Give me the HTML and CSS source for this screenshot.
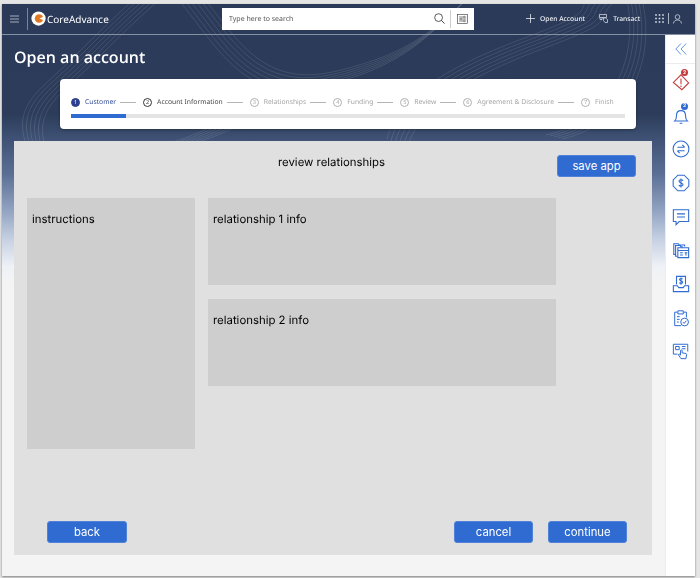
FILE: index.html
```html
<!DOCTYPE html>
<html lang="en">

<head>
  <meta charset="UTF-8">
  <meta name="viewport" content="width=device-width, initial-scale=1.0">
  <title>Open an account</title>
  <link rel="stylesheet" href="styles.css">
</head>

<body>
  <div class="app">
    <svg class="swirl" width="693" height="300" viewBox="0 0 693 300" fill="none">
      <defs>
        <g id="strand-a"><path d="M24 140C10 100 40 85 70 55S120 5 150-20"/></g>
        <g id="strand-b"><path d="M180 0C220 50 245 100 320 82S420 40 470-10"/></g>
        <g id="strand-c"><path d="M385 135C395 95 440 65 520 35S570 10 590-10"/></g>
        <g id="strand-d"><path d="M560 135C625 120 655 60 640-5"/></g>
        <g id="strand-e"><path d="M165 140C190 132 210 125 235 105"/></g>
      </defs>
      <g class="swirl-lines">
        <use href="#strand-a"/><use href="#strand-a" x="4" y="1"/><use href="#strand-a" x="8" y="2"/><use href="#strand-a" x="12" y="3"/><use href="#strand-a" x="16" y="4"/><use href="#strand-a" x="20" y="5"/>
        <use href="#strand-b"/><use href="#strand-b" x="3" y="-3"/><use href="#strand-b" x="6" y="-6"/><use href="#strand-b" x="9" y="-9"/><use href="#strand-b" x="12" y="-12"/><use href="#strand-b" x="15" y="-15"/>
        <use href="#strand-c"/><use href="#strand-c" x="4" y="2"/><use href="#strand-c" x="8" y="4"/><use href="#strand-c" x="12" y="6"/><use href="#strand-c" x="16" y="8"/><use href="#strand-c" x="20" y="10"/>
        <use href="#strand-d"/><use href="#strand-d" x="-4" y="-1"/><use href="#strand-d" x="-8" y="-2"/><use href="#strand-d" x="-12" y="-3"/><use href="#strand-d" x="-16" y="-4"/>
        <use href="#strand-e"/><use href="#strand-e" x="5"/><use href="#strand-e" x="10"/><use href="#strand-e" x="15"/><use href="#strand-e" x="20"/><use href="#strand-e" x="25"/>
      </g>
    </svg>

    <header class="topbar">
      <div class="brand">
        <svg class="burger" width="9" height="8" viewBox="0 0 9 8"><path d="M0 1h9M0 4h9M0 7h9" stroke="#c3cad6" stroke-width=".8"/></svg>
        <span class="brand-sep"></span>
        <svg class="logo" width="15" height="15" viewBox="0 0 16 16">
          <circle cx="8" cy="8" r="7.6" fill="#fff"/>
          <circle cx="8.6" cy="8" r="4.6" fill="#e07a22"/>
          <path d="M9 8L15 5.4V10.6Z" fill="#fff"/>
        </svg>
        <span class="brand-name">CoreAdvance</span>
      </div>

      <div class="search">
        <span class="search-text">Type here to search</span>
        <svg width="11" height="11" viewBox="0 0 11 11" fill="none" stroke="#333"><circle cx="4.6" cy="4.6" r="3.9" stroke-width=".8"/><path d="M7.5 7.5L10.6 10.6" stroke-width=".9"/></svg>
        <span class="search-sep"></span>
        <svg width="11" height="10" viewBox="0 0 11 10" fill="none" stroke="#333" stroke-width=".6"><rect x=".5" y=".5" width="10" height="9"/><path d="M2 3h4M8.200 3h1M2 5h1.200M5.200 5h4M2 7h4M8.200 7h1"/><circle cx="7.200" cy="3" r=".8"/><circle cx="4.200" cy="5" r=".8"/><circle cx="7.200" cy="7" r=".8"/></svg>
      </div>

      <nav class="actions">
        <a class="action" href="#">
          <svg width="9" height="9" viewBox="0 0 9 9"><path d="M4.5 0v9M0 4.500h9" stroke="#e4e8ee" stroke-width=".8"/></svg>
          Open Account
        </a>
        <a class="action" href="#">
          <svg width="9" height="9" viewBox="0 0 9 9" fill="none" stroke="#e4e8ee" stroke-width=".7"><path d="M.5.500h7v3h-7zM3 3.500v2H1v-2M5 4h1.500l2 1.500v3H6L4.500 6.500V4z"/></svg>
          Transact
        </a>
        <span class="account">
          <svg width="9" height="9" viewBox="0 0 9 9" fill="#e4e8ee"><path d="M.2.200h1.600v1.600H.2zM3.700.200h1.600v1.600H3.700zM7.200.200h1.600v1.600H7.200zM.2 3.700h1.600v1.600H.2zM3.700 3.700h1.600v1.600H3.700zM7.200 3.700h1.600v1.600H7.200zM.2 7.200h1.600v1.600H.2zM3.700 7.200h1.600v1.600H3.700zM7.200 7.200h1.600v1.600H7.200z"/></svg>
          <span class="account-sep"></span>
          <svg width="9" height="10" viewBox="0 0 9 10" fill="none" stroke="#e4e8ee" stroke-width=".7"><circle cx="4.500" cy="3" r="2.300"/><path d="M.5 9.500C.8 6.800 2.500 6 4.500 6s3.700.8 4 3.500"/></svg>
        </span>
      </nav>
    </header>

    <div class="content">
      <main class="page">
        <h1 class="page-title">Open an account</h1>

        <section class="stepper">
          <ol class="steps">
            <li class="step step-current"><span class="step-num">1</span>Customer</li>
            <li class="step step-next"><span class="step-num">2</span>Account Information</li>
            <li class="step"><span class="step-num">3</span>Relationships</li>
            <li class="step"><span class="step-num">4</span>Funding</li>
            <li class="step"><span class="step-num">5</span>Review</li>
            <li class="step"><span class="step-num">6</span>Agreement &amp; Disclosure</li>
            <li class="step step-last"><span class="step-num">7</span>Finish</li>
          </ol>
          <div class="progress"><div class="progress-fill"></div></div>
        </section>

        <section class="panel">
          <div class="panel-head">
            <h2 class="panel-title">review relationships</h2>
            <button class="btn btn-save">save app</button>
          </div>

          <div class="panel-body">
            <div class="box box-side">instructions</div>
            <div class="rel-list">
              <div class="box box-rel">relationship 1 info</div>
              <div class="box box-rel">relationship 2 info</div>
            </div>
          </div>

          <div class="panel-foot">
            <button class="btn btn-back">back</button>
            <div class="foot-right">
              <button class="btn">cancel</button>
              <button class="btn">continue</button>
            </div>
          </div>
        </section>
      </main>

      <aside class="side">
        <div class="side-top">
          <svg width="12" height="12" viewBox="0 0 12 12" fill="none" stroke="#3f78d6" stroke-width=".8"><path d="M6 .5L.8 6L6 11.500M11.200.5L6 6l5.200 5.500"/></svg>
        </div>
        <ul class="side-icons">
          <li class="side-item">
            <svg viewBox="0 0 20 20" fill="none" stroke="#c23b3b" stroke-width="1.200"><path d="M10 2L18.500 11 11 18.500 1.500 10.500z"/><path d="M10 6v6.500M10 14v1.500"/></svg>
            <span class="badge badge-red">2</span>
          </li>
          <li class="side-item">
            <svg viewBox="0 0 20 20" fill="none" stroke="#2f6bd1" stroke-width="1.200"><path d="M3 15.500c1.800-1.500 2-3 2-6 0-3.300 2-5.500 5-5.500s5 2.200 5 5.500c0 3 .2 4.500 2 6zM8.500 18h3"/></svg>
            <span class="badge badge-blue">2</span>
          </li>
          <li class="side-item">
            <svg viewBox="0 0 20 20" fill="none" stroke="#2f6bd1" stroke-width="1.200"><circle cx="10" cy="10" r="8.800"/><path d="M6 8h8M11.500 5.500L14 8M14 12H6M8.500 14.500L6 12"/></svg>
          </li>
          <li class="side-item">
            <svg viewBox="0 0 20 20" fill="none" stroke="#2f6bd1" stroke-width="1.200"><path d="M6.500 1.300h7l5.200 5.200v7l-5.200 5.200h-7l-5.200-5.200v-7z"/><path d="M12.300 7.500C11.800 6.700 11 6.400 10 6.400c-1.300 0-2.200.6-2.200 1.700 0 2.300 4.500 1.300 4.500 3.700 0 1.100-1 1.800-2.300 1.800-1 0-1.900-.4-2.400-1.200M10 5v10"/></svg>
          </li>
          <li class="side-item">
            <svg viewBox="0 0 20 20" fill="none" stroke="#2f6bd1" stroke-width="1.200"><path d="M1.500 2h17v13H8l-3.500 3.500V15h-3z"/><path d="M5.500 6.500h9M5.500 10h9"/></svg>
          </li>
          <li class="side-item">
            <svg viewBox="0 0 20 20" fill="none" stroke="#2f6bd1" stroke-width="1.200"><path d="M4 15H2V3h5l1 1.500h6V6M6 17H4V5h5l1 1.500h2"/><path d="M6.500 7.500h12v11h-12zM6.500 10.500h12M9 13h3M9 15.500h3M14 13h3M15.500 13v3"/></svg>
          </li>
          <li class="side-item">
            <svg viewBox="0 0 20 20" fill="none" stroke="#2f6bd1" stroke-width="1.200"><path d="M5 10.500V1.500h10v9M1.500 12v6.500h17V12H14l-1.500 2h-5L6 12z"/><path d="M11.800 4.500C11.400 4 10.800 3.800 10 3.800c-1 0-1.700.5-1.700 1.300 0 1.800 3.500 1 3.500 2.900 0 .8-.8 1.400-1.800 1.400-.8 0-1.400-.3-1.800-.9M10 2.800v8"/></svg>
          </li>
          <li class="side-item">
            <svg viewBox="0 0 20 20" fill="none" stroke="#2f6bd1" stroke-width="1.100"><path d="M10 18.500H3V3.500h3M13 3.500h3v6"/><path d="M6.500 2h6v3.500h-6zM5.500 8.500h3M5.500 11.500h3M5.500 14.500h2"/><circle cx="14" cy="14.500" r="4.300"/><path d="M12 14.500l1.500 1.500 2.500-3"/></svg>
          </li>
          <li class="side-item">
            <svg viewBox="0 0 20 20" fill="none" stroke="#2f6bd1" stroke-width="1.100"><path d="M6 13.500H1.500v-11h16v8"/><path d="M4 5h4v3.500H4zM11 5h4M11 7.500h4"/><path d="M9 17l-2-3 1-.7 1.500 1.200V9.500c0-1 1.800-1 1.800 0V12l4.200.8c.5.100.7.500.7 1l-.7 4.700H10z"/></svg>
          </li>
        </ul>
      </aside>
    </div>
  </div>
</body>

</html>
```

FILE: styles.css
```css
html {
  box-sizing: border-box;
  font-family: "Inter", sans-serif;
  font-size: 16px;
  text-rendering: geometricPrecision;
}

*,
*::before,
*::after {
  box-sizing: inherit;
}

body {
  margin: 0;
  height: 578px;
  padding: 4px 5px 2px 2px;
  background-color: #e5e5e5;
  overflow: hidden;
}

.app {
  position: relative;
  height: 572px;
  display: flex;
  flex-direction: column;
  background: linear-gradient(#2a3a58 0, #2c3c5a 110px, #3f5275 135px, #5b6f95 170px, #8fa1c0 205px, #c5d0e2 235px, #eef1f6 262px, #f4f4f4 280px);
  box-shadow: 0 1px 2px rgba(0, 0, 0, .45);
  overflow: hidden;
}

.swirl {
  position: absolute;
  left: 0;
  top: 0;
}

.swirl-lines {
  stroke: #fff;
  stroke-width: .5;
  opacity: .22;
}

/* top bar */
.topbar {
  position: relative;
  flex: none;
  height: 31px;
  padding: 4px 0 5px;
  display: flex;
  align-items: center;
  border-bottom: 1px solid #8592a6;
  color: #fff;
}

.brand {
  width: 220px;
  display: flex;
  align-items: center;
  padding-left: 8px;
}

.burger {
  flex: none;
}

.brand-sep {
  width: 1px;
  height: 22px;
  margin: 0 3px 0 8px;
  background-color: #77849a;
}

.logo {
  flex: none;
}

.brand-name {
  margin-left: 1px;
  font-family: "Noto Sans", sans-serif;
  font-size: 10px;
}

.search {
  width: 252px;
  height: 22px;
  display: flex;
  align-items: center;
  padding: 0 6px 0 7px;
  background-color: #fff;
}

.search-text {
  flex: 1;
  padding-top: 2px;
  font-family: "Noto Sans", sans-serif;
  font-size: 7px;
  color: #555;
}

.search-sep {
  width: 1px;
  height: 18px;
  margin: 0 6px 0 5px;
  background-color: #ccc;
}

.actions {
  flex: 1;
  display: flex;
  align-items: center;
  padding-left: 52px;
  font-family: "Noto Sans", sans-serif;
  font-size: 6.7px;
  font-weight: 500;
}

.action {
  display: flex;
  align-items: center;
  gap: 5px;
  margin-right: 14px;
  color: #eef1f5;
  text-decoration: none;
}

.account {
  display: flex;
  align-items: center;
  margin-left: 1px;
}

.account-sep {
  width: 1px;
  height: 11px;
  margin: 0 4px;
  background-color: #aab4c4;
}

/* page */
.content {
  position: relative;
  flex: 1;
  min-height: 0;
  display: flex;
}

.page {
  flex: 1;
  min-width: 0;
  padding: 0 13px 21px 12px;
  display: flex;
  flex-direction: column;
}

.page-title {
  margin: 12px 0 11px;
  font-family: "Open Sans", sans-serif;
  font-size: 16px;
  line-height: 21px;
  font-weight: 600;
  color: #fff;
}

.stepper {
  flex: none;
  height: 50px;
  margin: 0 16px 12px 46px;
  padding: 18px 11px 0;
  background-color: #fff;
  border-radius: 4px;
  box-shadow: 0 1px 3px rgba(0, 0, 0, .35);
}

.steps {
  display: flex;
  margin: 0;
  padding: 0;
  list-style: none;
  font-family: "Noto Sans", sans-serif;
  font-size: 6.75px;
  line-height: 10px;
  color: #a5a5a5;
}

.step {
  display: flex;
  align-items: center;
}

.step::after {
  content: "";
  width: 16px;
  height: 1px;
  margin: 0 7px 0 4px;
  background-color: #b5b5b5;
}

.step-last::after {
  display: none;
}

.step-num {
  width: 9px;
  height: 9px;
  margin-right: 5px;
  display: flex;
  align-items: center;
  justify-content: center;
  border: 1px solid #b0b0b0;
  border-radius: 50%;
  font-size: 5.5px;
}

.step-current {
  color: #2f4a94;
}

.step-current .step-num {
  border-color: #2d408f;
  background-color: #2d408f;
  color: #fff;
}

.step-next {
  color: #444;
}

.step-next .step-num {
  border-color: #333;
}

.progress {
  height: 4px;
  margin-top: 7px;
  background-color: #e4e4e4;
}

.progress-fill {
  width: 10%;
  height: 100%;
  background-color: #2f6bd1;
}

/* wireframe panel */
.panel {
  flex: 1;
  min-height: 0;
  display: flex;
  flex-direction: column;
  padding: 14px 16px 12px 13px;
  background-color: #e0e0e0;
}

.panel-head {
  position: relative;
  height: 43px;
}

.panel-title {
  margin: 0;
  text-align: center;
  font-size: 11.4px;
  line-height: 14px;
  font-weight: 400;
  color: #000;
}

.btn {
  width: 79px;
  height: 22px;
  padding: 0;
  border: 1px solid #4f82d8;
  border-radius: 3px;
  background-color: #2f6bd1;
  font-family: "Inter", sans-serif;
  font-size: 11.3px;
  color: #fff;
}

.btn-back {
  width: 80px;
}

.btn-save {
  position: absolute;
  right: 0;
  top: 0;
}

.panel-body {
  flex: 1;
  display: flex;
  align-items: flex-start;
  gap: 13px;
}

.box {
  padding: 14px 5px 0;
  background-color: #cecece;
  font-size: 11.4px;
  line-height: 15px;
  color: #000;
}

.box-side {
  width: 168px;
  height: 251px;
}

.rel-list {
  display: flex;
  flex-direction: column;
  gap: 14px;
}

.box-rel {
  width: 348px;
  height: 87px;
}

.panel-foot {
  display: flex;
  justify-content: space-between;
  padding: 0 9px 0 20px;
}

.foot-right {
  display: flex;
  gap: 15px;
}

/* right rail */
.side {
  flex: none;
  width: 30px;
  background-color: #fff;
  border-left: 1px solid #ececec;
}

.side-top {
  height: 29px;
  display: flex;
  align-items: center;
  justify-content: center;
  border-bottom: 1px solid #ececec;
}

.side-icons {
  margin: 1px 0 0;
  padding: 0;
  list-style: none;
}

.side-item {
  position: relative;
  height: 33.7px;
  display: flex;
  align-items: center;
  justify-content: center;
}

.side-item svg {
  width: 18px;
  height: 18px;
}

.badge {
  position: absolute;
  left: 15px;
  top: 4px;
  width: 7px;
  height: 7px;
  display: flex;
  align-items: center;
  justify-content: center;
  border-radius: 50%;
  font-size: 5px;
  font-weight: 700;
  color: #fff;
}

.badge-red {
  background-color: #c23b3b;
}

.badge-blue {
  background-color: #2f6bd1;
}
```
